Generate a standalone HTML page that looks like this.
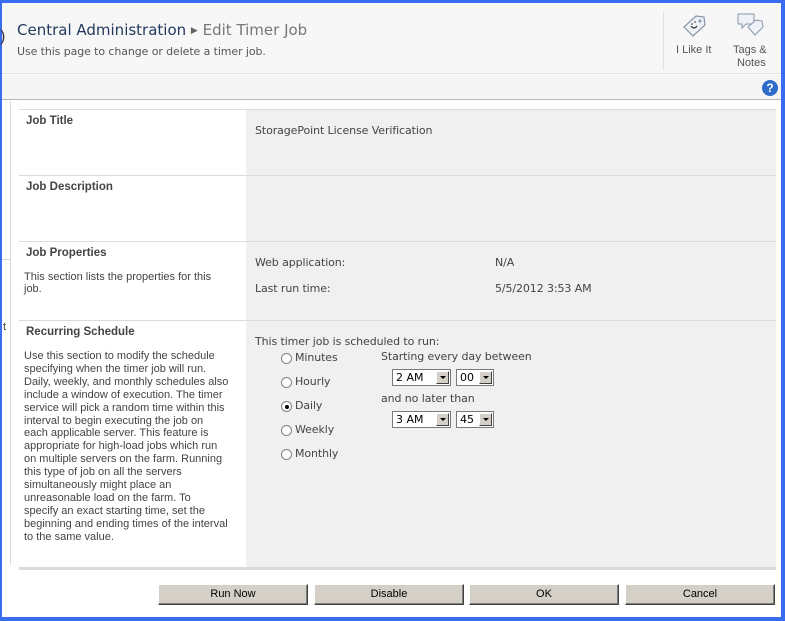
<!DOCTYPE html>
<html><head><style>
*{margin:0;padding:0;box-sizing:border-box}
body{width:785px;height:621px;overflow:hidden;background:#3a6cf0;position:relative;font-family:"DejaVu Sans",Verdana,sans-serif;color:#444}
.a{position:absolute}
.v{font-family:"DejaVu Sans",sans-serif;font-size:11px;color:#444;white-space:nowrap;letter-spacing:-0.1px}
.t{font-family:"Liberation Sans",sans-serif;font-size:11px;color:#444;line-height:12.2px;white-space:nowrap}
.h{font-family:"Liberation Sans",sans-serif;font-size:11.5px;font-weight:bold;color:#444}
.hl{position:absolute;left:19px;width:757px;height:1px;background:#dcdcdc}
.btn{position:absolute;top:584px;width:150px;height:21px;background:#d4d0c8;border:1px solid;border-color:#fff #404040 #404040 #fff;box-shadow:inset -1px -1px #808080;font-family:"Liberation Sans",sans-serif;font-size:11px;color:#000;text-align:center;line-height:19px}
.sel{position:absolute;height:17px;border:1px solid #7a7a7a;background:#fff;font-family:"DejaVu Sans",sans-serif;font-size:11px;color:#000;line-height:15px;padding-left:3px}
.sel i{position:absolute;right:1px;top:1px;width:13px;height:13px;background:#d4d0c8;border:1px solid;border-color:#fff #404040 #404040 #fff}
.sel i:after{content:"";position:absolute;left:3px;top:4px;border:3px solid transparent;border-top:3px solid #000}
.r{position:absolute;width:11px;height:11px;border-radius:50%;border:1px solid #808080;background:#fff}
</style></head><body>
<div class="a" style="left:2px;top:3px;width:779px;height:614px;background:#fff"></div>
<div class="a" style="left:2px;top:3px;width:779px;height:71px;background:#f7f7f7;border-bottom:1px solid #e0e0e0"></div>
<div class="a" style="left:2px;top:75px;width:779px;height:25px;background:#f5f5f5;border-bottom:1px solid #b8b8b8"></div>
<div class="a" style="left:0px;top:28px;font-family:'Liberation Sans';font-size:16px;color:#333">)</div>
<div class="a" style="left:17px;top:21px;font-family:'DejaVu Sans',sans-serif;font-size:15px;color:#23395d;white-space:nowrap">Central Administration <span style="font-size:9px;color:#666;position:relative;top:-2px">▶</span> <span style="color:#777">Edit Timer Job</span></div>
<div class="a v" style="left:17px;top:45px;font-size:11px;color:#555">Use this page to change or delete a timer job.</div>
<div class="a" style="left:663px;top:12px;width:1px;height:58px;background:#e0e0e0"></div>
<svg class="a" style="left:680px;top:13px" width="28" height="26" viewBox="0 0 28 26"><path d="M4 14 L16 3 L24 4 L25 12 L13 23 Z" fill="#eef2f7" stroke="#8a97a8" stroke-width="1.2"/><circle cx="20" cy="8" r="1.5" fill="#8a97a8"/><path d="M11 13 q3 4 6 0" stroke="#333" stroke-width="1.2" fill="none"/><circle cx="12" cy="11" r=".8" fill="#333"/><circle cx="15" cy="9" r=".8" fill="#333"/></svg>
<div class="a t" style="left:676px;top:44px;color:#555">I Like It</div>
<svg class="a" style="left:736px;top:11px" width="30" height="28" viewBox="0 0 30 28"><path d="M2 3 h16 v10 h-8 l-4 4 v-4 h-4 Z" fill="#eef2f7" stroke="#8a97a8"/><path d="M12 16 L20 9 L26 10 L27 16 L19 24 Z" fill="#eef2f7" stroke="#8a97a8"/></svg>
<div class="a t" style="left:733px;top:44px;color:#555;text-align:center;line-height:13px">Tags &amp;<br>&nbsp;Notes</div>
<div class="a" style="left:762px;top:80px;width:16px;height:16px;border-radius:50%;background:#2f6bc9;color:#fff;font:bold 12px 'Liberation Sans';text-align:center;line-height:16px">?</div>
<div class="a" style="left:10px;top:101px;width:1px;height:464px;background:#dcdcdc"></div>
<div class="a" style="left:2px;top:259px;width:8px;height:1px;background:#dcdcdc"></div>
<div class="a t" style="left:3px;top:321px">t</div>
<div class="a" style="left:246px;top:109px;width:530px;height:459px;background:#f0f0f0"></div>
<div class="hl" style="top:109px"></div>
<div class="hl" style="top:175px"></div>
<div class="hl" style="top:241px"></div>
<div class="hl" style="top:320px"></div>
<div class="hl" style="top:567px;height:3px;background:#dadada"></div>
<div class="a h" style="left:26px;top:115px">Job Title</div>
<div class="a h" style="left:26px;top:181px">Job Description</div>
<div class="a h" style="left:26px;top:247px">Job Properties</div>
<div class="a t" style="left:24px;top:271px">This section lists the properties for this<br>job.</div>
<div class="a h" style="left:26px;top:326px">Recurring Schedule</div>
<div class="a t" style="left:24px;top:350px;line-height:12.9px">Use this section to modify the schedule<br>specifying when the timer job will run.<br>Daily, weekly, and monthly schedules also<br>include a window of execution. The timer<br>service will pick a random time within this<br>interval to begin executing the job on<br>each applicable server. This feature is<br>appropriate for high-load jobs which run<br>on multiple servers on the farm. Running<br>this type of job on all the servers<br>simultaneously might place an<br>unreasonable load on the farm. To<br>specify an exact starting time, set the<br>beginning and ending times of the interval<br>to the same value.</div>
<div class="a v" style="left:255px;top:124px">StoragePoint License Verification</div>
<div class="a v" style="left:255px;top:256px">Web application:</div>
<div class="a v" style="left:495px;top:256px">N/A</div>
<div class="a v" style="left:255px;top:282px">Last run time:</div>
<div class="a v" style="left:495px;top:282px">5/5/2012 3:53 AM</div>
<div class="a v" style="left:255px;top:335px">This timer job is scheduled to run:</div>
<div class="r" style="left:281px;top:353px"></div><div class="a v" style="left:295px;top:351px">Minutes</div>
<div class="r" style="left:281px;top:377px"></div><div class="a v" style="left:295px;top:375px">Hourly</div>
<div class="r" style="left:281px;top:401px"></div><div class="a" style="left:285px;top:405px;width:4px;height:4px;border-radius:50%;background:#000"></div><div class="a v" style="left:295px;top:399px">Daily</div>
<div class="r" style="left:281px;top:425px"></div><div class="a v" style="left:295px;top:423px">Weekly</div>
<div class="r" style="left:281px;top:449px"></div><div class="a v" style="left:295px;top:447px">Monthly</div>
<div class="a v" style="left:381px;top:350px">Starting every day between</div>
<div class="sel" style="left:392px;top:369px;width:59px">2 AM<i></i></div>
<div class="sel" style="left:456px;top:369px;width:38px">00<i></i></div>
<div class="a v" style="left:381px;top:392px">and no later than</div>
<div class="sel" style="left:392px;top:411px;width:59px">3 AM<i></i></div>
<div class="sel" style="left:456px;top:411px;width:38px">45<i></i></div>
<div class="btn" style="left:158px">Run Now</div>
<div class="btn" style="left:314px">Disable</div>
<div class="btn" style="left:469px">OK</div>
<div class="btn" style="left:625px">Cancel</div>
</body></html>
